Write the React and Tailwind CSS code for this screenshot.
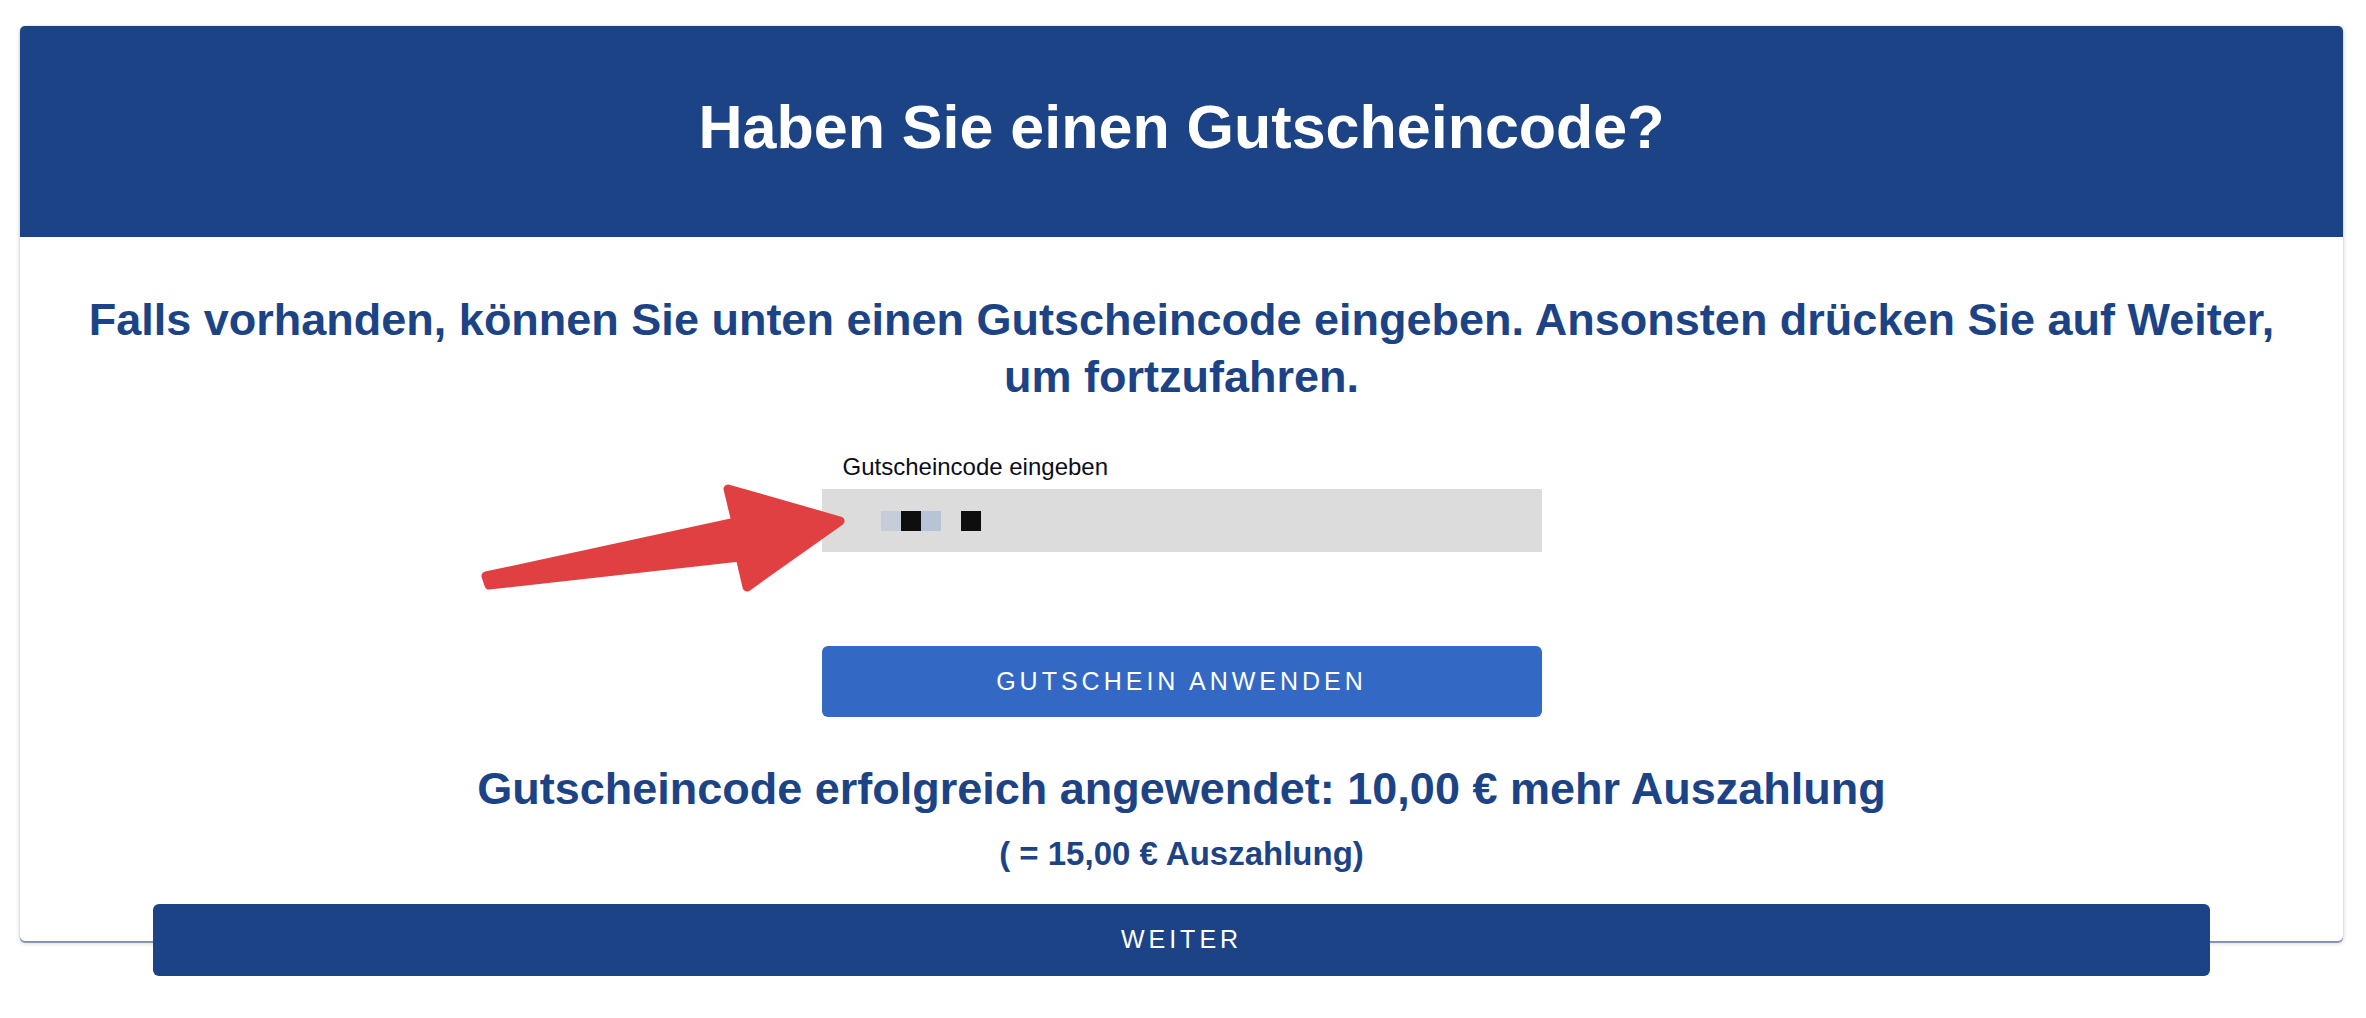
import React from "react";

function Arrow() {
  return (
    <svg
      className="absolute left-[450px] top-[449px] pointer-events-none"
      width="390"
      height="130"
      viewBox="0 0 390 130"
    >
      <path
        d="M 16 101 L 266 47 L 258 14 L 370 46 L 277 112 L 270 82 L 19 110 Z"
        fill="#e14043"
        stroke="#e14043"
        strokeWidth="9"
        strokeLinejoin="round"
      />
    </svg>
  );
}

export default function App() {
  return (
    <div className="min-h-[1018px] bg-white pt-[26px] font-['Liberation_Sans',Arial,sans-serif]">
      <div className="relative ml-[20px] mr-[23px] rounded-[5px] bg-white shadow-[0_2px_0_0_rgba(28,67,133,0.45),0_2px_5px_0_rgba(0,0,0,0.2),0_0_0_1px_rgba(0,0,0,0.04)]">
        <div className="h-[211px] rounded-t-[5px] bg-[#1c4385] pt-[71px] text-center">
          <h1 className="text-[61px] leading-[61px] font-bold text-white">
            Haben Sie einen Gutscheincode?
          </h1>
        </div>
        <div className="flex flex-col items-center px-[60px] pt-[54px] pb-[67px]">
          <p className="text-center text-[45px] leading-[57px] font-bold text-[#1c4385]">
            Falls vorhanden, können Sie unten einen Gutscheincode eingeben. Ansonsten drücken Sie auf Weiter, um fortzufahren.
          </p>
          <div className="mt-[48px] flex w-[720px] flex-col">
            <label className="pl-[21px] text-[24px] leading-[28px] text-[#0b0d1a]">
              Gutscheincode eingeben
            </label>
            <div className="mt-[8px] flex h-[63px] items-center bg-[#dcdcdc] pl-[59px]">
              <span className="h-[20px] w-[20px] bg-[#c6cdd8]" />
              <span className="h-[20px] w-[20px] bg-[#0e0e0e]" />
              <span className="h-[20px] w-[20px] bg-[#b7c4d5]" />
              <span className="ml-[20px] h-[20px] w-[20px] bg-[#0e0e0e]" />
            </div>
            <button className="mt-[94px] flex h-[71px] items-center justify-center rounded-[6px] bg-[#3369c4] text-[25px] tracking-[4px] text-white">
              GUTSCHEIN ANWENDEN
            </button>
          </div>
          <p className="mt-[45px] text-center text-[45px] leading-[54px] font-bold text-[#1c4385]">
            Gutscheincode erfolgreich angewendet: 10,00 € mehr Auszahlung
          </p>
          <p className="mt-[18px] text-center text-[33px] leading-[40px] font-bold text-[#1c4385]">
            ( = 15,00 € Auszahlung)
          </p>
        </div>
        <Arrow />
      </div>
      <div className="relative z-10 ml-[153px] mr-[156px] -mt-[37px] flex h-[72px] items-center justify-center rounded-[6px] bg-[#1c4385] text-[25px] tracking-[4px] text-white">
        WEITER
      </div>
    </div>
  );
}
